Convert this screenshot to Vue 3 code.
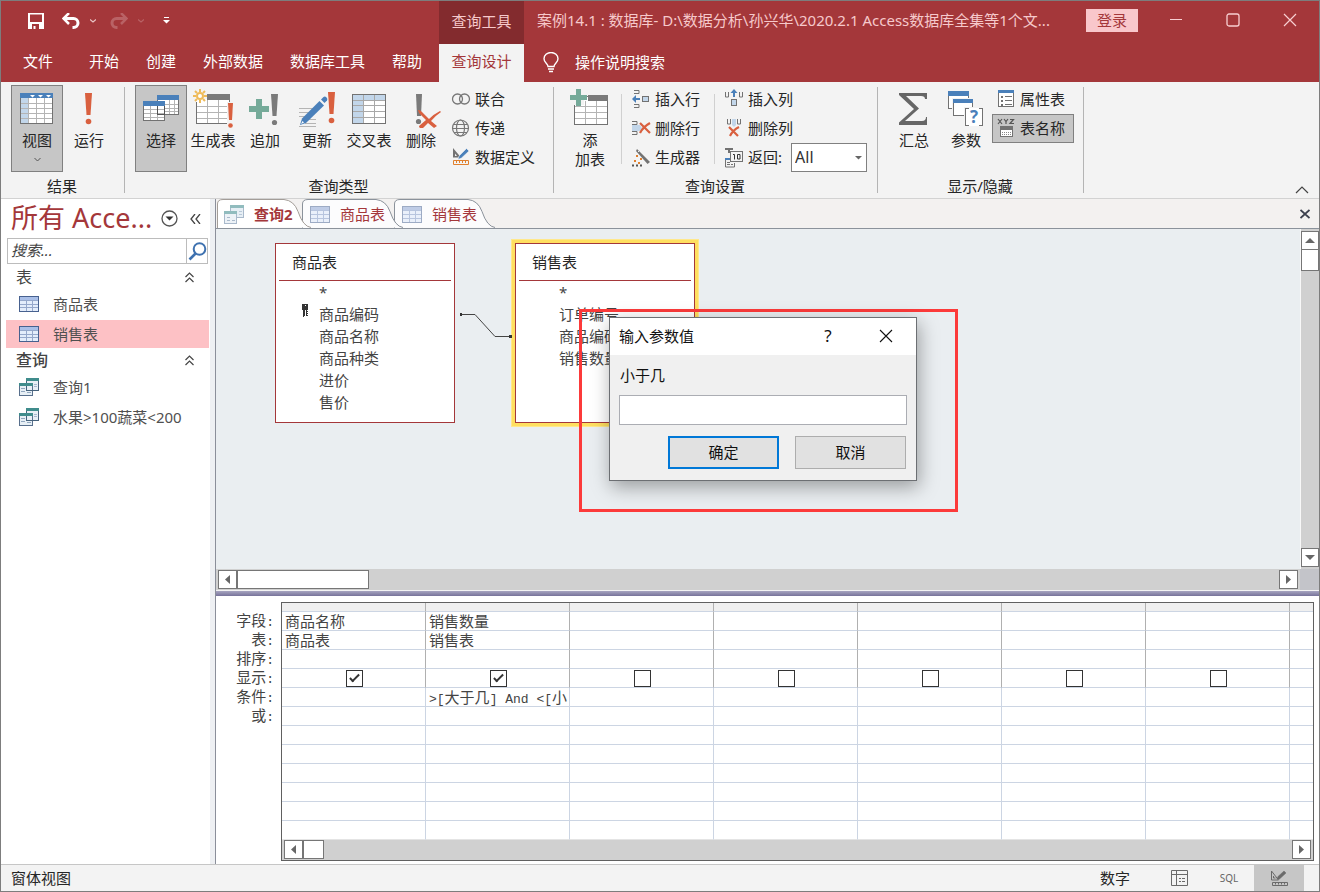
<script setup>
import { ref } from 'vue'

const menuTabs = ['开始', '创建', '外部数据', '数据库工具', '帮助']
const search = ref('')
const paramValue = ref('')
const returnCount = ref('All')

const navGroups = [
  { title: '表', icon: 'table', items: [{ name: '商品表' }, { name: '销售表', selected: true }] },
  { title: '查询', icon: 'query', bold: true, items: [{ name: '查询1' }, { name: '水果>100蔬菜<200' }] },
]

const docTabs = [
  { name: '查询2', icon: 'query', active: true, w: 85 },
  { name: '商品表', icon: 'table', w: 92 },
  { name: '销售表', icon: 'table', w: 92 },
]

const tables = [
  { name: '商品表', cls: 'node-a', fields: ['*', '商品编码', '商品名称', '商品种类', '进价', '售价'], key: 1 },
  { name: '销售表', cls: 'node-b', fields: ['*', '订单编号', '商品编码', '销售数量'], key: -1 },
]

const rowLabels = ['字段', '表', '排序', '显示', '条件', '或']
const columns = [
  { field: '商品名称', table: '商品表', show: ref(true) },
  { field: '销售数量', table: '销售表', show: ref(true) },
  { show: ref(false) },
  { show: ref(false) },
  { show: ref(false) },
  { show: ref(false) },
  { show: ref(false) },
]
const blankRows = 7
</script>

<template>
  <div class="window">
    <header class="header">
      <div class="titlebar">
        <div class="quick">
          <button aria-label="保存" class="qa save">
            <svg width="16" height="16" viewBox="0 0 16 16"><path fill="#fff" fill-rule="evenodd" d="M0 0h16v16H0zM2 1.500v7.500h12v-7.500zM4 11v5h1.500v-3h2v3h3.500v-5z" /></svg>
          </button>
          <button aria-label="撤消" class="qa undo">
            <svg width="18" height="16" viewBox="0 0 18 16"><path d="M1 5.500h10.500a4.500 4.500 0 0 1 0 9h-1" fill="none" stroke="#fff" stroke-width="3" /><path d="M7 0L1.500 5.500L7 11" fill="none" stroke="#fff" stroke-width="2.500" /></svg>
          </button>
          <button aria-label="撤消列表" class="qa drop">
            <svg width="6" height="4" viewBox="0 0 6 4"><path d="M0 .5l3 2.500l3-2.500" fill="none" stroke="#e9c4c5" stroke-width="1.200" /></svg>
          </button>
          <button aria-label="恢复" class="qa redo">
            <svg width="18" height="16" viewBox="0 0 18 16"><path d="M17 5.500H6.500a4.500 4.500 0 0 0 0 9h1" fill="none" stroke="#b96265" stroke-width="3" /><path d="M11 0l5.500 5.500L11 11" fill="none" stroke="#b96265" stroke-width="2.500" /></svg>
          </button>
          <button aria-label="恢复列表" class="qa drop2">
            <svg width="6" height="4" viewBox="0 0 6 4"><path d="M0 .5l3 2.500l3-2.500" fill="none" stroke="#b96265" stroke-width="1.200" /></svg>
          </button>
          <button aria-label="自定义快速访问工具栏" class="qa">
            <svg width="7" height="7" viewBox="0 0 7 7"><path d="M1 0h5v1H1zM0 3h7L3.500 6.500z" fill="#fff" /></svg>
          </button>
        </div>
        <div class="context">查询工具</div>
        <div class="title">案例14.1 : 数据库- D:\数据分析\孙兴华\2020.2.1 Access数据库全集等1个文...</div>
        <button class="login">登录</button>
        <div class="winctl">
          <button aria-label="最小化"><svg width="14" height="14" viewBox="0 0 14 14"><path d="M1 6.500h12" stroke="#f8cfd1" /></svg></button>
          <button aria-label="最大化"><svg width="14" height="14" viewBox="0 0 14 14"><rect x="1" y="1" width="12" height="12" rx="2" fill="none" stroke="#f8cfd1" stroke-width="1.300" /></svg></button>
          <button aria-label="关闭"><svg width="14" height="14" viewBox="0 0 14 14"><path d="M1 1l12 12M13 1L1 13" stroke="#f8cfd1" stroke-width="1.200" /></svg></button>
        </div>
      </div>
      <div class="menubar">
        <nav class="menus">
          <button class="file">文件</button>
          <button v-for="m in menuTabs" :key="m">{{ m }}</button>
        </nav>
        <button class="active">查询设计</button>
        <button class="tell">
          <svg width="16" height="21" viewBox="0 0 16 21"><path d="M5 14.500c0-3-4-3.800-4-7.800a7 6.200 0 0 1 14 0c0 4-4 4.800-4 7.800zM5 17h6M6 19.500h4" fill="none" stroke="#fff" stroke-width="1.400" /></svg>
          <span>操作说明搜索</span>
        </button>
      </div>
    </header>

    <section class="ribbon">
      <div class="group">
        <div class="tools">
          <button class="big on">
            <svg width="44" height="40" viewBox="0 0 44 40" shape-rendering="crispEdges">
              <rect x="5" y="5" width="33" height="31" fill="#fff" /><rect x="5" y="5" width="33" height="5" fill="#4a80ba" /><rect x="6" y="10" width="8" height="25" fill="#c2d6ea" />
              <path d="M6 15.500h32M6 20.500h32M6 25.500h32M6 30.500h32M13.500 10v26M21.500 10v26M29.500 10v26" stroke="#b4b4b4" /><path d="M5.500 10v25.500h32v-25.500" fill="none" stroke="#727272" />
              <path d="M15 7h5l-2.500 2.500zM23 7h5l-2.500 2.500zM31 7h5l-2.500 2.500z" fill="#fff" shape-rendering="auto" />
            </svg>
            <span>视图</span>
            <svg width="7" height="5" viewBox="0 0 7 5" class="chev"><path d="M.5 1l3 3l3-3" fill="none" stroke="#555" /></svg>
          </button>
          <button class="big">
            <svg width="44" height="40" viewBox="0 0 44 40"><path d="M18 5h7l-1.500 22h-4z" fill="#d9603f" /><circle cx="21.500" cy="33.500" r="2.800" fill="#d9603f" /></svg>
            <span>运行</span>
          </button>
        </div>
        <div class="caption">结果</div>
      </div>

      <div class="group">
        <div class="tools">
          <button class="big on">
            <svg width="44" height="40" viewBox="0 0 44 40" shape-rendering="crispEdges">
              <rect x="18.500" y="7.500" width="21" height="19" fill="#fff" stroke="#727272" /><rect x="18" y="7" width="22" height="5" fill="#4a80ba" /><path d="M26 16.500h13M26 20.500h13M26 23.500h13M30.500 12v14M35.500 12v14" stroke="#b4b4b4" />
              <rect x="4.500" y="13.500" width="21" height="19" fill="#fff" stroke="#727272" /><rect x="4" y="13" width="22" height="5" fill="#4a80ba" /><path d="M5 21.500h20M5 25.500h20M5 29.500h20M11.500 18v14M18.500 18v14" stroke="#b4b4b4" /><path d="M18.500 18v8.500h7v-8.500" fill="none" stroke="#555" />
            </svg>
            <span>选择</span>
          </button>
          <button class="big">
            <svg width="44" height="40" viewBox="0 0 44 40">
              <path d="M5 11h33v25H5z" fill="#fff" /><path d="M16 6h23v6H16z" fill="#7a7a7a" />
              <path d="M6 18.500h31M6 24.500h31M6 30.500h31M16.500 12v24M27.500 12v24" stroke="#b4b4b4" shape-rendering="crispEdges" /><path d="M5.500 14v21.500h30M38.500 12v3" fill="none" stroke="#727272" shape-rendering="crispEdges" />
              <circle cx="9" cy="8" r="3" fill="#fff" stroke="#eebb5a" stroke-width="2" /><path d="M9 1v3M9 12v3M2 8h3M13 8h3M4 3l2 2M12 11l2 2M14 3l-2 2M4 13l2-2" stroke="#eebb5a" stroke-width="2" />
              <path d="M36 14h7v26h-7z" fill="#f3f3f3" /><path d="M37 15h5l-1 17h-3z" fill="#d9603f" /><circle cx="39.500" cy="37.500" r="2.300" fill="#d9603f" />
            </svg>
            <span>生成表</span>
          </button>
          <button class="big">
            <svg width="44" height="40" viewBox="0 0 44 40"><path d="M13 11h6v7h7v6h-7v7h-6v-7H6v-6h7z" fill="#75aa99" /><path d="M28 6h7l-1.500 22h-4z" fill="#7a7a7a" /><circle cx="31.500" cy="34.500" r="2.600" fill="#7a7a7a" /></svg>
            <span>追加</span>
          </button>
          <button class="big">
            <svg width="44" height="40" viewBox="0 0 44 40"><path d="M4 20.500h15M4 24.500h13M4 28.500h10M12 31.500h9M10 35.500h11M4 38.500h17" stroke="#b4b4b4" /><path d="M5 37l2-6.500L24.500 13l4.500 4.500L11 35z" fill="#4a80ba" /><path d="M26 11.500l2.500-2.500q1.500-1 3 .5t.5 3L29.500 15z" fill="#4a80ba" /><path d="M6 36l1.500-3 1.500 1.500z" fill="#fff" /><path d="M33 4h7l-1.500 22h-4z" fill="#d9603f" /><circle cx="36.500" cy="32.500" r="2.800" fill="#d9603f" /></svg>
            <span>更新</span>
          </button>
          <button class="big">
            <svg width="44" height="40" viewBox="0 0 44 40" shape-rendering="crispEdges"><rect x="5.500" y="6.500" width="33" height="29" fill="#fff" /><path d="M6 7h32v5H17v23H6z" fill="#c2d6ea" /><path d="M6 12.500h32M6 17.500h32M6 23.500h32M6 29.500h32M16.500 7v28M27.500 7v28" stroke="#a8a8a8" /><rect x="5.500" y="6.500" width="33" height="29" fill="none" stroke="#727272" /></svg>
            <span>交叉表</span>
          </button>
          <button class="big">
            <svg width="44" height="40" viewBox="0 0 44 40"><path d="M17 6h6l-1 22h-4z" fill="#7a7a7a" /><circle cx="19.500" cy="33.500" r="2.600" fill="#7a7a7a" /><path d="M19 22q2-.5 4 2l7 7q5-5 11-8l1 1q-6 4-10 9l6 5-3 2-6-5-5 5q-4 1-4-2l7-6-7-7z" fill="#d9603f" /></svg>
            <span>删除</span>
          </button>
          <div class="stack">
            <button class="small">
              <svg width="20" height="20" viewBox="0 0 20 20" fill="none" stroke="#777" stroke-width="1.300"><circle cx="6.500" cy="10" r="5" /><circle cx="13.500" cy="10" r="5" /></svg>
              <span>联合</span>
            </button>
            <button class="small">
              <svg width="20" height="20" viewBox="0 0 20 20" fill="none" stroke="#777" stroke-width="1.200"><circle cx="9.500" cy="10" r="8" /><ellipse cx="9.500" cy="10" rx="4" ry="8" /><path d="M2.500 6.500h14M1.500 10.500h16M3 14.500h13" /></svg>
              <span>传递</span>
            </button>
            <button class="small">
              <svg width="20" height="20" viewBox="0 0 20 20"><path d="M2 1l8 9.500H2zM4 6.500v2.500h2z" fill="#727272" fill-rule="evenodd" /><path d="M7 12.500l1-3.500L15.500 1.500l2.500 2.500L10.500 11z" fill="#4a80ba" stroke="#f3f3f3" stroke-width=".6" /><path d="M2.500 13.500h15v4h-15zM5.500 14v2M8.500 14v2M11.500 14v2M14.500 14v2" fill="none" stroke="#e0802e" /></svg>
              <span>数据定义</span>
            </button>
          </div>
        </div>
        <div class="caption">查询类型</div>
      </div>

      <div class="group">
        <div class="tools">
          <button class="big">
            <svg width="44" height="40" viewBox="0 0 44 40" shape-rendering="crispEdges"><rect x="6.500" y="8.500" width="33" height="28" fill="#fff" stroke="#727272" /><path d="M20 7h20v6H20z" fill="#7a7a7a" /><path d="M7 18.500h32M7 24.500h32M7 30.500h32M17.500 13v23M28.500 13v23" stroke="#b4b4b4" /><path d="M5 0h11v17H5z" fill="#f3f3f3" /><path d="M8 1h5v6h6v5h-6v6H8v-6H2V7h6z" fill="#75aa99" /></svg>
            <span>添<br>加表</span>
          </button>
          <div class="bar"></div>
          <div class="stack">
            <button class="small">
              <svg width="20" height="20" viewBox="0 0 20 20"><path d="M3 1.500h5v3H3M3 18.500h5v-3H3" fill="none" stroke="#727272" /><rect x="11.500" y="7.500" width="6" height="5" fill="#c2d6ea" stroke="#727272" /><path d="M1 10l4-4v3h4v2H5v3z" fill="#4a80ba" /></svg>
              <span>插入行</span>
            </button>
            <button class="small">
              <svg width="20" height="20" viewBox="0 0 20 20"><path d="M1 3.500h5v3H1M1 16.500h5v-3H1" fill="none" stroke="#727272" /><path d="M1 7h8l2 3-2 3H1z" fill="#c2d6ea" /><path d="M9 5l10 10M19 5q-7 4-10 10" fill="none" stroke="#d9603f" stroke-width="2.200" /></svg>
              <span>删除行</span>
            </button>
            <button class="small">
              <svg width="20" height="20" viewBox="0 0 20 20"><path d="M6 2l13 13-2.500 2L5 4z" fill="#727272" /><path d="M7 5l2-2" stroke="#f3f3f3" /><path d="M5 8h2v2H5zM9 11h2v2H9zM3 13h2v2H3zM7 15h2v2H7z" fill="#e0802e" /><path d="M1 18.500h2M5 18.500h2M9 18.500h2" stroke="#555" stroke-width="2" /></svg>
              <span>生成器</span>
            </button>
          </div>
          <div class="bar"></div>
          <div class="stack">
            <button class="small">
              <svg width="20" height="20" viewBox="0 0 20 20"><path d="M1.500 3v5h3V3M15.500 3v5h3V3" fill="none" stroke="#727272" /><rect x="7.500" y="10.500" width="5" height="6" fill="#c2d6ea" stroke="#727272" /><path d="M10 0l3.500 4H11v4H9V4H6.500z" fill="#4a80ba" /></svg>
              <span>插入列</span>
            </button>
            <button class="small">
              <svg width="20" height="20" viewBox="0 0 20 20"><path d="M3.500 1v5h3V1M13.500 1v5h3V1" fill="none" stroke="#727272" /><path d="M8 1h4v6l-2 2-2-2z" fill="#c2d6ea" /><path d="M5 9l9 9M15 9q-6 3-9 9" fill="none" stroke="#d9603f" stroke-width="2.200" /></svg>
              <span>删除列</span>
            </button>
            <div class="small return">
              <svg width="20" height="20" viewBox="0 0 20 20"><path d="M1 0h8v2H6v3H4V2H1z" fill="#727272" /><path d="M1.500 12v7h9v-4M3 14.500h3M3 16.500h3M7 16.500h2" fill="none" stroke="#727272" /><path d="M1 10h5v2H1z" fill="#4a80ba" /><rect x="6.500" y="3.500" width="12" height="10" fill="#f3f3f3" stroke="#727272" /><path d="M9 6.500h1.500v5M13.500 6.500h2.500v4.500h-2.500z" fill="none" stroke="#333" /></svg>
              <label for="ret">返回:</label>
              <div class="combo">
                <select id="ret" v-model="returnCount"><option>All</option><option>5</option><option>25</option><option>100</option></select>
                <svg width="7" height="4" viewBox="0 0 7 4"><path d="M0 0h7L3.500 3.500z" fill="#666" /></svg>
              </div>
            </div>
          </div>
        </div>
        <div class="caption">查询设置</div>
      </div>

      <div class="group">
        <div class="tools">
          <button class="big">
            <svg width="44" height="40" viewBox="0 0 44 40"><path d="M7 5h28v6h-2q0-3-4-3H14l13 12.500L13 33h17q4 0 4-4h1v8H7v-2.500L22 21 7 7z" fill="#666" /></svg>
            <span>汇总</span>
          </button>
          <button class="big">
            <svg width="44" height="40" viewBox="0 0 44 40" shape-rendering="crispEdges"><rect x="4.500" y="3.500" width="20" height="17" fill="#fff" stroke="#727272" /><rect x="4" y="3" width="21" height="5" fill="#4a80ba" /><path d="M8 10h24v20H8z" fill="#f3f3f3" /><rect x="9.500" y="11.500" width="19" height="16" fill="#fff" stroke="#727272" /><rect x="9" y="11" width="20" height="4" fill="#4a80ba" /><path d="M20 19h20v20H20z" fill="#f3f3f3" /><rect x="22" y="20" width="17" height="18" fill="#fff" /><path d="M25 20.500h-3.500v17H25M35 20.500h3.500v17H35" fill="none" stroke="#727272" /><text x="30" y="35" text-anchor="middle" font-size="17" font-weight="700" fill="#4a80ba" font-family="Open Sans, sans-serif">?</text></svg>
            <span>参数</span>
          </button>
          <div class="stack">
            <button class="small">
              <svg width="20" height="20" viewBox="0 0 20 20" shape-rendering="crispEdges"><rect x="2.500" y="1.500" width="15" height="16" fill="#fff" stroke="#727272" /><path d="M2 1h16v3H2z" fill="#4a80ba" /><path d="M9 7.500h7M9 11.500h7M9 15.500h7" stroke="#727272" /><path d="M5 6.500h2v2H5zM5 10.500h2v2H5zM5 14.500h2v2H5z" fill="#727272" /></svg>
              <span>属性表</span>
            </button>
            <button class="small on">
              <svg width="20" height="20" viewBox="0 0 20 20"><path d="M2 1l4 5M6 1l-4 5M8 1l2 2.500L12 1M10 3.500V6M14 1.500h3.500L14 5.500h4" fill="none" stroke="#555" stroke-width="1.200" /><rect x="4.500" y="9.500" width="12" height="9" fill="#fff" stroke="#727272" /><path d="M4 8h13v4H4z" fill="#727272" /><path d="M6 14.500h10M6 16.500h10" stroke="#888" stroke-dasharray="1 1" /></svg>
              <span>表名称</span>
            </button>
          </div>
        </div>
        <div class="caption">显示/隐藏</div>
      </div>
      <button class="collapse" aria-label="折叠功能区"><svg width="14" height="8" viewBox="0 0 14 8"><path d="M1 7l6-6 6 6" fill="none" stroke="#444" stroke-width="1.200" /></svg></button>
    </section>

    <main class="body">
      <aside class="nav">
        <div class="navtitle">
          <h1>所有 Acce...</h1>
          <button aria-label="选择类别"><svg width="17" height="17" viewBox="0 0 17 17"><circle cx="8.500" cy="8.500" r="7.500" fill="#fff" stroke="#555" stroke-width="1.300" /><path d="M4.500 6.500h8l-4 4z" fill="#333" /></svg></button>
          <button aria-label="收起导航窗格"><svg width="11" height="10" viewBox="0 0 11 10"><path d="M5 0L1 5l4 5M10 0L6 5l4 5" fill="none" stroke="#444" stroke-width="1.300" /></svg></button>
        </div>
        <div class="search">
          <input v-model="search" placeholder="搜索..." aria-label="搜索">
          <button aria-label="搜索"><svg width="19" height="19" viewBox="0 0 19 19" fill="none" stroke="#3f72b0"><circle cx="11.500" cy="7" r="5.800" stroke-width="2" /><path d="M7.500 11.500L1.500 17.500" stroke-width="2.600" /></svg></button>
        </div>
        <section v-for="g in navGroups" :key="g.title" class="navgroup">
          <h2 :class="{ strong: g.bold }"><span>{{ g.title }}</span>
            <button :aria-label="'折叠' + g.title"><svg width="9" height="11" viewBox="0 0 9 11"><path d="M.5 5l4-4 4 4M.5 10l4-4 4 4" fill="none" stroke="#444" stroke-width="1.200" /></svg></button>
          </h2>
          <button v-for="i in g.items" :key="i.name" class="navitem" :class="{ sel: i.selected }">
            <svg v-if="g.icon === 'table'" width="20" height="16" viewBox="0 0 20 16" shape-rendering="crispEdges"><rect width="20" height="16" fill="#47618f" /><rect x="1" y="1" width="18" height="3" fill="#a9bfe8" /><rect x="1" y="4" width="18" height="11" fill="#e4edfb" /><path d="M1 4.500h18M1 8.500h18M1 11.500h18M7.500 4v11M13.500 4v11" stroke="#96a8cb" /></svg>
            <svg v-else width="20" height="18" viewBox="0 0 20 18" shape-rendering="crispEdges"><rect x="7.500" y=".5" width="12" height="12" fill="#e7eff5" stroke="#46627c" /><rect x="7" y="0" width="13" height="3" fill="#3f8c8c" /><path d="M15 6.500h3M15 8.500h3" stroke="#a5b8cd" /><rect x=".5" y="5.500" width="13" height="12" fill="#e7eff5" stroke="#576f8c" /><rect x="0" y="5" width="14" height="3" fill="#3f8c8c" /><path d="M7.500 8v4.500h6" fill="none" stroke="#46627c" /><path d="M2 10.500h4M2 13.500h4M8 14.500h4" stroke="#8fa6be" /></svg>
            <span>{{ i.name }}</span>
          </button>
        </section>
      </aside>
      <div class="gutter"></div>

      <section class="work">
        <div class="doctabs">
          <button v-for="t in docTabs" :key="t.name" class="doctab" :class="{ current: t.active }" :style="{ width: t.w + 'px' }">
            <svg class="shape" :width="t.w + 10" height="30" :viewBox="`0 0 ${t.w + 10} 30`">
              <path :d="`M.5 30V6Q.5 1.500 6 1.500H${t.w - 18}q10 1 14 12q5 15 13 16`" :fill="t.active ? '#fff' : '#fcfcfd'" :stroke="t.active ? '#a39d98' : '#8b929b'" />
            </svg>
            <svg v-if="t.icon === 'table'" class="ico" width="20" height="17" viewBox="0 0 20 17" shape-rendering="crispEdges"><rect width="20" height="17" fill="#9dabc4" /><rect x="1" y="1" width="18" height="3" fill="#bfcce6" /><rect x="1" y="4" width="18" height="12" fill="#eaf0fa" /><path d="M1 4.500h18M1 8.500h18M1 12.500h18M7.500 4v12M13.500 4v12" stroke="#b8c5de" /></svg>
            <svg v-else class="ico" width="20" height="19" viewBox="0 0 20 19" shape-rendering="crispEdges"><rect x="6.500" y=".5" width="13" height="12" fill="#e7eff5" stroke="#a9b9cb" /><rect x="6" y="0" width="14" height="3" fill="#91bcbe" /><path d="M15 6.500h3M15 9.500h3" stroke="#b9c8d8" /><rect x=".5" y="6.500" width="12" height="12" fill="#edf2f7" stroke="#a9b9cb" /><rect x="0" y="6" width="13" height="3" fill="#91bcbe" /><path d="M3 12.500h3M3 15.500h3M8 15.500h3" stroke="#a9b9cb" /></svg>
            <span>{{ t.name }}</span>
          </button>
          <button class="closedoc" aria-label="关闭文档"><svg width="10" height="10" viewBox="0 0 10 10"><path d="M.5 1l9 8M9.500 1l-9 8" stroke="#3d414e" stroke-width="1.800" /></svg></button>
        </div>

        <div class="upper">
          <div class="canvas">
            <article v-for="t in tables" :key="t.name" class="node" :class="t.cls">
              <h3>{{ t.name }}</h3>
              <ul>
                <li v-for="(f, i) in t.fields" :key="f">
                  <svg v-if="i === t.key" class="key" width="8" height="16" viewBox="0 0 8 16" shape-rendering="crispEdges"><path d="M0 1h6v6H0zM3 2v1h1v-1zM1 7h2v6H2v1H1zM4 7h1v1h1v1H5v1h1v1H5v1h1v1H4z" fill="#333" fill-rule="evenodd" /></svg>
                  <span>{{ f }}</span>
                </li>
              </ul>
            </article>
            <svg class="link" width="54" height="28" viewBox="0 0 54 28"><path d="M2 3.500h14l20 22h15" fill="none" stroke="#444" /><path d="M1 2h2v3H1zM50 24h3v3h-3z" fill="#333" /></svg>
            <div class="marker"></div>
            <form class="dialog" role="dialog" aria-labelledby="dlg-title" @submit.prevent>
              <div class="dlghead">
                <span id="dlg-title">输入参数值</span>
                <button type="button" aria-label="帮助">?</button>
                <button type="button" aria-label="关闭"><svg width="14" height="14" viewBox="0 0 14 14"><path d="M1 1l12 12M13 1L1 13" stroke="#111" stroke-width="1.100" /></svg></button>
              </div>
              <div class="dlgbody">
                <label for="param">小于几</label>
                <input id="param" v-model="paramValue" type="text">
                <div class="actions">
                  <button class="ok">确定</button>
                  <button type="button">取消</button>
                </div>
              </div>
            </form>
          </div>
          <div class="vscroll">
            <button aria-label="向上"><svg width="10" height="5" viewBox="0 0 10 5"><path d="M5 0l5 5H0z" fill="#666" /></svg></button>
            <div class="vthumb"></div>
            <button class="down" aria-label="向下"><svg width="10" height="5" viewBox="0 0 10 5"><path d="M5 5l5-5H0z" fill="#666" /></svg></button>
          </div>
        </div>
        <div class="hrow">
          <div class="hscroll">
            <button aria-label="向左"><svg width="5" height="9" viewBox="0 0 5 9"><path d="M5 0v9L0 4.500z" fill="#666" /></svg></button>
            <div class="hthumb wide"></div>
            <button class="right" aria-label="向右"><svg width="5" height="9" viewBox="0 0 5 9"><path d="M0 0v9l5-4.500z" fill="#666" /></svg></button>
          </div>
          <div class="corner"></div>
        </div>
        <div class="splitter"></div>

        <div class="lower">
          <div class="rowlabels">
            <div v-for="l in rowLabels" :key="l">{{ l }}<span class="half">:</span></div>
          </div>
          <div class="gridbox">
            <table>
              <colgroup><col v-for="(c, i) in columns" :key="i" class="qcol"><col></colgroup>
              <thead><tr><th v-for="n in 8" :key="n"></th></tr></thead>
              <tbody>
                <tr class="d"><td v-for="(c, i) in columns" :key="i">{{ c.field }}</td><td></td></tr>
                <tr class="d"><td v-for="(c, i) in columns" :key="i">{{ c.table }}</td><td></td></tr>
                <tr class="d"><td v-for="n in 8" :key="n"></td></tr>
                <tr class="d"><td v-for="(c, i) in columns" :key="i" class="chk"><input v-model="c.show.value" type="checkbox" :aria-label="'显示第' + (i + 1) + '列'"></td><td></td></tr>
                <tr>
                  <td></td>
                  <td><span class="half">&gt;[</span>大于几<span class="half">] And &lt;[</span>小</td>
                  <td v-for="n in 6" :key="n"></td>
                </tr>
                <tr v-for="r in blankRows" :key="r"><td v-for="n in 8" :key="n"></td></tr>
              </tbody>
            </table>
            <div class="hscroll">
              <button aria-label="向左滚动"><svg width="5" height="9" viewBox="0 0 5 9"><path d="M5 0v9L0 4.500z" fill="#666" /></svg></button>
              <div class="hthumb"></div>
              <button class="right" aria-label="向右滚动"><svg width="5" height="9" viewBox="0 0 5 9"><path d="M0 0v9l5-4.500z" fill="#666" /></svg></button>
            </div>
          </div>
        </div>
      </section>
    </main>

    <footer class="status">
      <span class="mode">窗体视图</span>
      <span class="num">数字</span>
      <button aria-label="数据表视图"><svg width="17" height="16" viewBox="0 0 17 16" fill="none" stroke="#6a6a6a"><path d="M.5.5h16v15H.5zM.5 4.500h16M5.500.5v15M8 8.500h2M11 8.500h3M8 11.500h2M11 11.500h3" /></svg></button>
      <button class="sql">SQL</button>
      <button class="on" aria-label="设计视图"><svg width="18" height="17" viewBox="0 0 18 17" fill="none" stroke="#6a6a6a"><path d="M1.500 1v9h7zM3.500 6v2h2" /><path d="M7 9l1-2.500L14 1l2 2-6.500 6z" fill="#6a6a6a" stroke-width=".5" /><path d="M2.500 12.500h15v3h-15zM5.500 13v1.500M8.500 13v1.500M11.500 13v1.500M14.500 13v1.500" /></svg></button>
    </footer>
  </div>
</template>

<style>
body { margin: 0; }
</style>

<style scoped>
.window {
  box-sizing: border-box; min-height: 100vh; display: flex; flex-direction: column;
  border: 1px solid #7d7d7d; background: #fff; color: #262626;
  font: 15px/20px "Noto Sans", "Noto Sans CJK SC", sans-serif;
}
.window *, .window *::before, .window *::after { box-sizing: border-box; }
button, input, select { font: inherit; color: inherit; margin: 0; }
button { background: none; border: 0; padding: 0; display: flex; align-items: center; justify-content: center; white-space: nowrap; }
svg { display: block; flex: none; }
h1, h2, h3, ul { margin: 0; padding: 0; font-weight: 400; list-style: none; }

.header { background: #a4373a; color: #fff; }
.titlebar { display: flex; height: 43px; align-items: center; }
.quick { width: 438px; flex: none; display: flex; align-items: center; padding: 0 0 4px 27px; }
.save { margin-right: 18px; }
.undo { margin-right: 10px; }
.drop { margin-right: 14px; }
.redo { margin-right: 10px; }
.drop2 { margin-right: 19px; }
.context { width: 85px; height: 43px; flex: none; background: #832b2e; color: #f6c9cb; line-height: 40px; text-align: center; }
.title { flex: 1; min-width: 0; padding-left: 13px; overflow: hidden; white-space: nowrap; color: #f6c9cb; line-height: 38px; height: 43px; }
.login { width: 52px; height: 23px; background: #f9c7cb; color: #a4373a; margin: 0 9px 4px 0; padding-bottom: 2px; }
.winctl { display: flex; height: 43px; padding: 0 1px 5px 0; }
.winctl button { width: 57px; }
.menubar { display: flex; height: 38px; }
.menus { width: 438px; flex: none; display: flex; gap: 3px; padding-left: 10px; }
.menubar button { padding: 0 12px 4px; }
.menus .file { margin-right: 9px; }
.menubar .active { width: 85px; background: #f3f3f3; color: #a4373a; }
.menubar .tell { gap: 16px; padding: 0 19px 2px; }

.ribbon { display: flex; background: #f3f3f3; border-bottom: 1px solid #d2d2d2; height: 117px; position: relative; }
.group { padding: 3px 9px 0 10px; position: relative; flex: none; border-right: 1px solid transparent; }
.group::after { content: ""; position: absolute; right: -1px; top: 5px; bottom: 5px; width: 1px; background: #b4b4b4; }
.tools { display: flex; height: 87px; }
.big { width: 52px; flex-direction: column; justify-content: flex-start; border: 1px solid transparent; padding-top: 2px; line-height: 19px; }
.big span { padding-top: 3px; }
.big .chev { margin-top: 7px; }
.on { background: #c6c6c6; border-color: #808080; }
.stack { display: flex; flex-direction: column; }
.small { height: 29px; display: flex; align-items: center; justify-content: flex-start; gap: 4px; padding: 0 8px 2px 3px; border: 1px solid transparent; }
.small.on { border-color: #808080; }
.return { padding: 0 0 0 3px; }
.return label { padding-bottom: 2px; }
.combo { position: relative; margin-left: 5px; width: 76px; height: 29px; }
.combo select { appearance: none; width: 100%; height: 100%; background: #fff; border: 1px solid #808080; border-radius: 0; padding: 0 3px 2px; color: #333; font-size: 16px; }
.combo svg { position: absolute; right: 5px; top: 13px; pointer-events: none; }
.bar { width: 1px; height: 70px; background: #d0d0d0; margin: 9px 5px 0; }
.caption { text-align: center; line-height: 24px; margin-top: 2px; padding-right: 2px; }
.collapse { position: absolute; right: 10px; bottom: 4px; }

.body { flex: 1; display: flex; min-height: 0; }
.nav { width: 209px; flex: none; padding: 0 1px 0 6px; }
.navtitle { height: 39px; display: flex; align-items: center; padding-left: 4px; }
.navtitle h1 { width: 150px; font-size: 27px; line-height: 36px; margin-bottom: 2px; color: #a4373a; white-space: nowrap; }
.navtitle button + button { margin-left: 12px; }
.search { display: flex; height: 26px; width: 201px; border: 1px solid #bcbcbc; margin-bottom: 1px; }
.search input { flex: 1; min-width: 0; border: 0; padding: 0 3px 2px; outline: 0; font-style: italic; }
.search input::placeholder { color: #444; opacity: 1; }
.search button { width: 21px; border-left: 1px solid #bcbcbc; }
.navgroup { display: flex; flex-direction: column; }
.navgroup h2 { display: flex; justify-content: space-between; align-items: center; height: 25px; padding: 0 15px 1px 9px; font-size: 16px; color: #444; }
.navgroup h2.strong { font-weight: 500; }
.navitem { height: 28px; justify-content: flex-start; gap: 14px; padding: 0 0 1px 13px; color: #505050; margin-left: -1px; }
.navitem + .navitem { margin-top: 2px; }
.navitem.sel { background: #fdc1c5; }
.gutter { width: 6px; flex: none; background: #eef0f3; border-right: 1px solid #8b8f9a; }
.work { flex: 1; min-width: 0; display: flex; flex-direction: column; }

.doctabs { height: 30px; flex: none; display: flex; background: #f3f1f0; border-bottom: 1px solid #8b929b; padding-left: 1px; position: relative; }
.doctab { position: relative; z-index: 1; justify-content: flex-start; height: 30px; padding-left: 8px; gap: 10px; color: #a4373a; }
.doctab:first-child { z-index: 3; padding-left: 7px; }
.doctab:nth-child(2) { z-index: 2; }
.doctab .shape { position: absolute; left: 0; top: -1px; }
.doctab .ico, .doctab span { position: relative; }
.current { font-weight: 700; }
.closedoc { margin-left: auto; width: 29px; }

.upper { flex: 1; min-height: 340px; display: flex; }
.canvas { flex: 1; min-width: 0; position: relative; background: #eaeef1; overflow: hidden; }
.node { position: absolute; top: 14px; width: 180px; height: 180px; background: #fff; border: 1px solid #a4373a; padding: 0 3px; color: #444; }
.node-a { left: 59px; }
.node-b { left: 299px; box-shadow: 0 0 0 3px #ffdf60, 0 0 0 4px #ffe88c; }
.node h3 { font-size: 15px; line-height: 36px; padding-left: 13px; border-bottom: 1px solid #a4373a; color: #262626; }
.node ul { line-height: 22px; }
.node li { position: relative; padding-left: 40px; }
.key { position: absolute; left: 23px; top: 0; }
.link { position: absolute; left: 243px; top: 82px; }
.marker { position: absolute; left: 363px; top: 80px; width: 379px; height: 203px; border: 3px solid #fc3a3a; }
.dialog { position: absolute; left: 393px; top: 88px; width: 308px; color: #111; background: #f0f0f0; border: 1px solid #6c6f73; box-shadow: 2px 6px 18px rgba(0, 0, 0, .35); }
.dlghead { display: flex; height: 37px; background: #fff; padding-left: 9px; }
.dlghead span { flex: 1; line-height: 36px; }
.dlghead button { width: 56px; font-size: 17px; padding-bottom: 1px; }
.dlghead button + button { width: 60px; }
.dlgbody { padding: 10px 9px 11px; }
.dlgbody label { display: block; line-height: 20px; margin-bottom: 10px; padding-left: 1px; }
.dlgbody input { display: block; width: 100%; height: 30px; border: 1px solid #abadb3; background: #fff; outline: 0; padding: 0 4px; }
.actions { display: flex; justify-content: flex-end; gap: 16px; padding: 11px 1px 0 0; }
.actions button { width: 111px; height: 33px; background: #e1e1e1; border: 1px solid #adadad; padding-bottom: 2px; }
.actions .ok { border: 2px solid #0078d7; }

.vscroll { width: 19px; flex: none; display: flex; flex-direction: column; background: #d0d0d0; border-left: 1px solid #f8f8f8; padding: 2px 0 2px; }
.vscroll button { height: 19px; background: #fff; border: 1px solid #767676; }
.vthumb { height: 22px; margin-top: -1px; background: #fff; border: 1px solid #767676; }
.vscroll .down { margin-top: auto; }
.hrow { display: flex; height: 22px; flex: none; background: #f3f3f3; }
.hscroll { flex: 1; display: flex; background: #d0d0d0; padding: 1px 2px; height: 21px; }
.hscroll button { width: 19px; background: #fff; border: 1px solid #767676; }
.hthumb { width: 21px; background: #fff; border: 1px solid #767676; }
.hthumb.wide { width: 132px; }
.hscroll .right { margin-left: auto; }
.corner { width: 19px; height: 21px; background: #c3c4c9; }
.splitter { height: 5px; flex: none; background: linear-gradient(#a7a4c0, #77739a); }

.lower { display: flex; padding: 6px 5px 3px 0; color: #444; }
.rowlabels { width: 65px; flex: none; padding: 9px 7px 0 0; text-align: right; line-height: 19px; }
.rowlabels div { height: 19px; }
.half { font-family: "Liberation Mono", monospace; font-size: 13px; line-height: 1px; white-space: pre; }
.gridbox { flex: 1; min-width: 0; border: 1px solid #606060; }
.gridbox .hscroll { flex: none; height: 20px; padding-top: 0; }
table { width: 100%; table-layout: fixed; border-collapse: separate; border-spacing: 0; }
.qcol { width: 144px; }
th { height: 9px; padding: 0; background: #efefef; border: solid #b0b0b0; border-width: 0 1px 1px 0; border-bottom-color: #ccd5e3; }
td { height: 19px; padding: 0 0 0 3px; line-height: 18px; overflow: hidden; white-space: nowrap; border: solid #ccd5e3; border-width: 0 1px 1px 0; }
.d td { border-right-color: #b0b0b0; }
tr > :last-child { border-right: 0; }
tr:last-child td { border-bottom-color: #e4e4e4; }
td.chk { padding: 0 0 0 2px; }
.chk input { appearance: none; display: block; width: 17px; height: 17px; margin: 0 auto; border: 1px solid #333; background: #fff; position: relative; }
.chk input:checked::after { content: ""; position: absolute; left: 5px; top: 1px; width: 5px; height: 10px; border: solid #333; border-width: 0 2px 2px 0; transform: rotate(45deg); }

.status { display: flex; align-items: stretch; height: 27px; background: #f3f3f3; border-top: 1px solid #c6c6c6; padding-right: 15px; line-height: 26px; }
.mode { padding-left: 10px; flex: 1; }
.num { width: 54px; }
.status button { width: 50px; color: #666; }
.status .on { border: 0; }
.status .sql { font-size: 10px; }
</style>
